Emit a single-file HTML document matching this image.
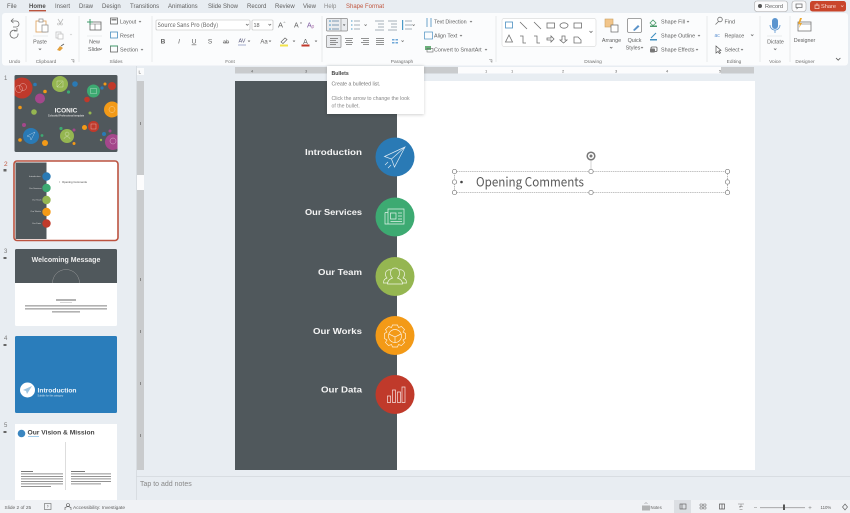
<!DOCTYPE html>
<html><head><meta charset="utf-8"><style>
html,body{margin:0;padding:0;width:850px;height:513px;overflow:hidden;background:#e8edf2}
svg{display:block;filter:blur(.35px)}
text{font-family:"Liberation Sans",sans-serif;font-size:5.4px;fill:#606060}
.tab{font-size:6px;fill:#606060}
.m{text-anchor:middle}
.g{font-size:4.8px;fill:#707070;text-anchor:middle}
.w{font-weight:bold;font-size:8.6px;fill:#f4f4f4}
.ic{fill:none;stroke:#707070;stroke-width:.8}
.wi{fill:none;stroke:#fff;stroke-width:.7;opacity:.85}
.ti{fill:none;stroke:#fff;stroke-width:.35;opacity:.8}
.h{fill:#fff;stroke:#777;stroke-width:.7}
.n{font-family:"Noto Sans CJK JP","Liberation Sans",sans-serif}
</style></head><body>
<svg width="850" height="513" viewBox="0 0 850 513" xmlns="http://www.w3.org/2000/svg">
<defs><filter id="sh" x="-20%" y="-20%" width="140%" height="140%"><feGaussianBlur stdDeviation="1.500"/></filter></defs>
<rect width="850" height="513" fill="#e8edf2"/>
<!-- tabs -->
<text class="tab" x="7" y="8">File</text>
<text class="tab" x="29" y="8" style="font-weight:bold;fill:#505050">Home</text>
<rect x="29" y="10" width="17" height="1.400" fill="#b9543f"/>
<text class="tab" x="55" y="8">Insert</text>
<text class="tab" x="79" y="8">Draw</text>
<text class="tab" x="102" y="8">Design</text>
<text class="tab" x="130" y="8">Transitions</text>
<text class="tab" x="168" y="8">Animations</text>
<text class="tab" x="208" y="8">Slide Show</text>
<text class="tab" x="247" y="8">Record</text>
<text class="tab" x="275" y="8">Review</text>
<text class="tab" x="303" y="8">View</text>
<text class="tab" x="324" y="8" style="fill:#8a8a8a">Help</text>
<text class="tab" x="346" y="8" style="fill:#c0563f">Shape Format</text>
<!-- top right -->
<rect x="754.500" y="1" width="33" height="10.500" rx="2.500" fill="#fbfbfc" stroke="#aaa" stroke-width=".6"/>
<circle cx="760" cy="6" r="2" fill="#555"/><text x="765" y="8" style="font-size:5.600px">Record</text>
<rect x="792" y="1" width="14" height="10.500" rx="2.500" fill="#fbfbfc" stroke="#aaa" stroke-width=".6"/>
<path class="ic" d="M796 4h6v3.500h-4l-1 1v-1h-1z"/>
<rect x="810" y="1" width="36" height="10.500" rx="2.500" fill="#c9452b"/>
<path d="M815 8.500V5h4v3.500zM817 3v3" fill="none" stroke="#f6cfc6" stroke-width=".7"/>
<text x="821" y="8" style="font-size:5.600px;fill:#f9dcd5">Share</text>
<path d="M841 5.500l1.200 1.200 1.200-1.200" fill="none" stroke="#f6cfc6" stroke-width=".6"/>
<!-- ribbon -->
<rect x="2" y="13" width="846" height="52.500" rx="3" fill="#fbfcfd"/>
<g stroke="#e3e5e8" stroke-width=".8">
<path d="M26 16v46M79 16v46M152 16v46M322 16v46M496 16v46M707 16v46M760 16v46M790 16v46"/>
<path d="M33 36h15M87 36h15M767 36h15"/>
</g>
<text class="g" x="14.500" y="63">Undo</text><text class="g" x="46" y="63">Clipboard</text>
<text class="g" x="116" y="63">Slides</text><text class="g" x="230" y="63">Font</text>
<text class="g" x="402" y="63">Paragraph</text><text class="g" x="593" y="63">Drawing</text>
<text class="g" x="734" y="63">Editing</text><text class="g" x="775" y="63">Voice</text><text class="g" x="805" y="63">Designer</text>
<!-- undo -->
<path class="ic" d="M11 21h5a3 3 0 0 1 0 6h-3M11 21l2.500-2.500M11 21l2.500 2"/>
<path class="ic" d="M18 33.500a4 4 0 1 1-1.500-2.500M17 28v3h-3"/>
<!-- clipboard -->
<rect x="36" y="21" width="10" height="11" fill="#fff" stroke="#e0a868" stroke-width=".9"/>
<rect x="39" y="19" width="4" height="3" fill="#fff" stroke="#888" stroke-width=".7"/>
<rect x="42" y="25" width="6" height="7" fill="#fff" stroke="#888" stroke-width=".7"/>
<text class="m" x="40" y="43.500">Paste</text>
<path class="ic" d="M38.800 48.500l1.200 1.200 1.200-1.200"/>
<path d="M58 19l2.500 4 2.500-4M60 23v1" fill="none" stroke="#bbb" stroke-width=".8"/><circle cx="58.500" cy="24" r="1" fill="none" stroke="#bbb" stroke-width=".6"/><circle cx="61.500" cy="24" r="1" fill="none" stroke="#bbb" stroke-width=".6"/>
<rect x="56" y="32" width="5" height="6" fill="none" stroke="#bbb" stroke-width=".7"/><rect x="58" y="34" width="5" height="5" fill="#fff" stroke="#bbb" stroke-width=".7"/>
<path d="M70 34l1 1 1-1" fill="none" stroke="#ccc" stroke-width=".6"/>
<path d="M57 50l3-4 3 2-3 3z" fill="#e3a03c"/><path d="M61 46l3-2" stroke="#666" stroke-width="1"/>
<path d="M71 59.500h3v3M72 61h1.500v1.500" fill="none" stroke="#888" stroke-width=".5"/>
<!-- slides -->
<rect x="90" y="22" width="11" height="8" fill="#fff" stroke="#666" stroke-width=".8"/><path d="M90 24h11M95 24v6" stroke="#666" stroke-width=".6"/>
<path d="M90 19v6M87 22h6" stroke="#3f9a6a" stroke-width="1"/>
<text class="m" x="94.500" y="43.500">New</text><text class="m" x="94" y="51">Slide</text><path class="ic" d="M99.500 48.500l1.200 1.200 1.200-1.200"/>
<rect x="110.500" y="18" width="7" height="6" fill="none" stroke="#666" stroke-width=".8"/><rect x="111.500" y="19" width="5" height="1.500" fill="#888"/>
<text x="120" y="23.500">Layout</text><path class="ic" d="M139 21l1 1 1-1"/>
<rect x="110.500" y="32" width="7" height="6" fill="none" stroke="#4a8fc0" stroke-width=".8"/>
<text x="120" y="37.500">Reset</text>
<rect x="110.500" y="46" width="7" height="6" fill="none" stroke="#666" stroke-width=".8"/><path d="M110 46h8" stroke="#3f9a6a" stroke-width="1"/>
<text x="120" y="51.500">Section</text><path class="ic" d="M141 49l1 1 1-1"/>
<!-- font -->
<rect x="156" y="20" width="94" height="10" rx="1" fill="#fff" stroke="#bbb" stroke-width=".6"/>
<text class="n" x="157.500" y="27" style="font-size:5.600px">Source Sans Pro (Body)</text><path class="ic" d="M246 24l1.300 1.300 1.300-1.300"/>
<rect x="252" y="20" width="21" height="10" rx="1" fill="#fff" stroke="#bbb" stroke-width=".6"/>
<text x="253.500" y="27" style="font-size:5.500px">18</text><path class="ic" d="M268.500 24l1.300 1.300 1.300-1.300"/>
<text x="278" y="27.500" style="font-size:7.500px">A</text><text x="283.500" y="24" style="font-size:4px">^</text>
<text x="294" y="27.500" style="font-size:7px">A</text><text x="300" y="24" style="font-size:4px">v</text>
<text x="307" y="27.500" style="font-size:7px;fill:#7c5aa0">A</text><text x="311.500" y="28" style="font-size:5px;fill:#b07ab0">p</text>
<text class="m" x="163" y="43.500" style="font-size:6.500px;font-weight:bold">B</text>
<text class="m" x="179" y="43.500" style="font-size:6.500px;font-style:italic">I</text>
<text class="m" x="194" y="43.500" style="font-size:6.500px;text-decoration:underline">U</text>
<text class="m" x="210" y="43.500" style="font-size:6.500px">S</text>
<text class="m" x="226" y="43.500" style="font-size:5.500px;text-decoration:line-through">ab</text>
<text class="m" x="242" y="42.500" style="font-size:5.500px;fill:#557">AV</text>
<text class="m" x="264" y="43.500" style="font-size:6px">Aa</text>
<path d="M238 45h8" stroke="#6a7ab0" stroke-width=".6"/>
<path class="ic" d="M248 40.500l1 1 1-1M269 40.500l1 1 1-1M293 40.500l1 1 1-1M315 40.500l1 1 1-1"/>
<path d="M281 42l4-4 2 1.500-4 4z" fill="none" stroke="#666" stroke-width=".7"/><rect x="280" y="44.500" width="8" height="2" fill="#f1e24a"/>
<text class="m" x="305.500" y="44" style="font-size:7px">A</text><rect x="301.500" y="44.500" width="8" height="2" fill="#c0392b"/>
<!-- paragraph -->
<rect x="326.500" y="18.500" width="21" height="12.500" rx="1" fill="#e9ebee" stroke="#888" stroke-width=".7"/><path d="M341 18.500v12.500" stroke="#888" stroke-width=".6"/>
<g stroke="#5a7fa0" stroke-width=".7"><path d="M332 21h7M332 25h7M332 29h7"/></g>
<g fill="#3f8fc0"><circle cx="330" cy="21" r=".8"/><circle cx="330" cy="25" r=".8"/><circle cx="330" cy="29" r=".8"/></g>
<path d="M343 24.500l1.100 1.100 1.100-1.100" fill="#444" stroke="#444" stroke-width=".5"/>
<g stroke="#8a96a2" stroke-width=".7" fill="none">
<path d="M354 21h6M354 25h6M354 29h6M375 21h9M378 24h6M378 27h6M375 30h9M388 21h9M391 24h6M391 27h6M388 30h9M405 21h7M405 25h7M405 29h7"/>
</g>
<g fill="#4a9ac8"><rect x="351" y="20.500" width="1.500" height="1"/><rect x="351" y="24.500" width="1.500" height="1"/><rect x="351" y="28.500" width="1.500" height="1"/><rect x="402" y="20" width="1.200" height="10"/></g>
<path class="ic" d="M364.500 24.500l1.100 1.100 1.100-1.100M412.500 24.500l1.100 1.100 1.100-1.100"/>
<rect x="326.500" y="35.500" width="14.500" height="12" rx="1" fill="#e9ebee" stroke="#888" stroke-width=".7"/>
<g stroke="#707070" stroke-width=".8"><path d="M330 38.500h8M330 40.500h6M330 42.500h8M330 44.500h6"/>
<path d="M345 38.500h8M346 40.500h6M345 42.500h8M346 44.500h6M361 38.500h8M363 40.500h6M361 42.500h8M363 44.500h6M376 38.500h8M376 40.500h8M376 42.500h8M376 44.500h8"/></g>
<g fill="#6fa8d8"><rect x="392" y="39" width="2.500" height="1.500"/><rect x="395.500" y="39" width="2.500" height="1.500"/><rect x="392" y="42" width="2.500" height="1.500"/><rect x="395.500" y="42" width="2.500" height="1.500"/></g>
<path class="ic" d="M401.500 40.500l1.100 1.100 1.100-1.100"/>
<text x="434" y="23.500">Text Direction</text><path class="ic" d="M470 21l1 1 1-1"/>
<path d="M427 18v9M431 18v9" stroke="#4a8fc0" stroke-width=".8"/>
<rect x="424.500" y="32" width="8" height="7" fill="none" stroke="#4a8fc0" stroke-width=".7"/>
<text x="434" y="37.500">Align Text</text><path class="ic" d="M460 35l1 1 1-1"/>
<rect x="425" y="46" width="6" height="4" fill="#6ab07a"/><rect x="427" y="48.500" width="6" height="3.500" fill="none" stroke="#666" stroke-width=".6"/>
<text x="434" y="51.500">Convert to SmartArt</text><path class="ic" d="M485 49l1 1 1-1"/>
<path d="M489 59.500h3v3M490 61h1.500v1.500" fill="none" stroke="#888" stroke-width=".5"/>
<!-- shapes -->
<rect x="502" y="18.500" width="94" height="28" rx="2" fill="#fff" stroke="#ddd" stroke-width=".7"/>
<rect x="505.500" y="22" width="7" height="6" fill="none" stroke="#4a8fc0" stroke-width=".8"/>
<path class="ic" d="M520 22l7 7M534 22l7 7"/>
<rect class="ic" x="547" y="23" width="7.500" height="5"/>
<ellipse class="ic" cx="564" cy="25.500" rx="4" ry="2.700"/>
<rect class="ic" x="574" y="23" width="7.500" height="5"/>
<path class="ic" d="M509 35l-3.500 7h7zM520 36h3v7h3M534 36h3v7h3M547 38h4v-2l3 3-3 3v-2h-4zM562 36h3v4h2l-3.500 3-3.500-3h2zM574 37h4l3 3v3h-7z"/>
<path class="ic" d="M589.500 31l1.500 1.500 1.500-1.500"/>
<!-- arrange -->
<rect x="605" y="19" width="8" height="8" fill="#f2c58a" stroke="#c9a060" stroke-width=".6"/>
<rect x="611" y="25" width="7" height="7" fill="#fff" stroke="#666" stroke-width=".7"/>
<text class="m" x="611.500" y="42">Arrange</text><path class="ic" d="M610 47l1.200 1.200 1.200-1.200"/>
<rect x="627.500" y="18.500" width="14" height="14" rx="1.500" fill="#fff" stroke="#888" stroke-width=".8"/>
<path d="M633 30l5-5 1.500 1.500-5 4.500z" fill="#5b93c9"/>
<text class="m" x="634.500" y="42">Quick</text><text class="m" x="633" y="49.500">Styles</text><path class="ic" d="M641 47l1 1 1-1"/>
<path d="M650 23l3-3 3 3-3 2.500z" fill="none" stroke="#4a9a6a" stroke-width=".8"/><rect x="650" y="25.500" width="7" height="1.500" fill="#4a9a6a"/>
<text x="661" y="23.500">Shape Fill</text><path class="ic" d="M687 21l1 1 1-1"/>
<path d="M651 38l5-5" stroke="#3f8fc0" stroke-width="1.100"/><rect x="650" y="39" width="7" height="1.500" fill="#3f8fc0"/>
<text x="661" y="37.500">Shape Outline</text><path class="ic" d="M698 35l1 1 1-1"/>
<rect x="651" y="47" width="6" height="4.500" rx="1" fill="#fff" stroke="#555" stroke-width=".8"/><rect x="650" y="48.500" width="5" height="4" rx="1" fill="#777"/>
<text x="661" y="51.500">Shape Effects</text><path class="ic" d="M696 49l1 1 1-1"/>
<!-- editing -->
<circle class="ic" cx="720" cy="19.500" r="2.300"/><path class="ic" d="M718.500 21.500l-3 3"/>
<text x="724.500" y="23.500">Find</text>
<text x="714.500" y="37" style="font-size:5px;fill:#5b8fd0">ac</text>
<text x="724.500" y="37.500">Replace</text><path class="ic" d="M751 34.500l1.200 1.200 1.200-1.200"/>
<path d="M716 46v7l2-1.500 1.500 2 1-.7-1.500-2 2-.5z" fill="#fff" stroke="#555" stroke-width=".7"/>
<text x="724.500" y="51.500">Select</text><path class="ic" d="M741 49l1 1 1-1"/>
<!-- mic -->
<rect x="772" y="18" width="6" height="11" rx="3" fill="#5c95cf"/><path d="M770 25a5 5 0 0 0 10 0M775 30v3" fill="none" stroke="#5c95cf" stroke-width=".8"/>
<text class="m" x="775.500" y="43.500">Dictate</text><path class="ic" d="M774 48.500l1.200 1.200 1.200-1.200"/>
<rect x="798" y="22" width="13" height="9" fill="#fff" stroke="#777" stroke-width=".8"/><path d="M798 24h13" stroke="#777" stroke-width=".6"/>
<path d="M800 18l-2 6h2l-1 4 3-5h-2l2-5z" fill="#eda72d"/>
<text class="m" x="804.500" y="42">Designer</text>
<path d="M836 58l2.200 2.200 2.200-2.200" fill="none" stroke="#555" stroke-width=".8"/>
<!-- rulers -->
<rect x="136" y="66" width=".8" height="434" fill="#d5d9de"/>
<rect x="137" y="68" width="7" height="7" fill="#fafbfc"/><text x="138.500" y="73.500" style="font-size:4.500px">L</text>
<rect x="235" y="67" width="223" height="6.500" fill="#c9cbcd"/>
<rect x="458" y="67" width="263" height="6.500" fill="#fcfcfd"/>
<rect x="721" y="67" width="33" height="6.500" fill="#c9cbcd"/>
<text x="251" y="72.500" style="font-size:4px">4</text><text x="305" y="72.500" style="font-size:4px">3</text><text x="485" y="72.500" style="font-size:4px">1</text><text x="511" y="72.500" style="font-size:4px">1</text><text x="562" y="72.500" style="font-size:4px">2</text><text x="615" y="72.500" style="font-size:4px">3</text><text x="666" y="72.500" style="font-size:4px">4</text><text x="719" y="72.500" style="font-size:4px">5</text>
<rect x="137" y="81" width="7" height="94" fill="#c9cbcd"/>
<rect x="137" y="175" width="7" height="15" fill="#fcfcfd"/>
<rect x="137" y="190" width="7" height="280" fill="#c9cbcd"/>
<g fill="#888"><rect x="140" y="122" width="1" height="3"/><rect x="140" y="278" width="1" height="3"/><rect x="140" y="330" width="1" height="3"/><rect x="140" y="382" width="1" height="3"/><rect x="140" y="434" width="1" height="3"/></g>
<!-- slide -->
<rect x="235" y="81" width="520" height="389" fill="#fff"/>
<rect x="235" y="81" width="162" height="389" fill="#50585c"/>
<text class="w" x="305" y="155" textLength="57" lengthAdjust="spacingAndGlyphs">Introduction</text>
<text class="w" x="305" y="215" textLength="57" lengthAdjust="spacingAndGlyphs">Our Services</text>
<text class="w" x="318" y="275" textLength="44" lengthAdjust="spacingAndGlyphs">Our Team</text>
<text class="w" x="313" y="334" textLength="49" lengthAdjust="spacingAndGlyphs">Our Works</text>
<text class="w" x="321" y="392.500" textLength="41" lengthAdjust="spacingAndGlyphs">Our Data</text>
<circle cx="395" cy="157" r="19.500" fill="#2a7ab5"/>
<circle cx="395" cy="217" r="19.500" fill="#3daa72"/>
<circle cx="395" cy="276.500" r="19.500" fill="#95b651"/>
<circle cx="395" cy="335.500" r="19.500" fill="#f39a17"/>
<circle cx="395" cy="394.500" r="19.500" fill="#c03a2b"/>
<!-- plane -->
<path class="wi" d="M405 147l-20.500 9.500 7 2.500 3 8zM405 147l-13.500 12M405 147l-10.500 20M388 162l-3 3M391 165l-3 3"/>
<!-- news -->
<path class="wi" d="M388 209h16v15h-16zM385 212.500h3M385 212.500v11.500h3M390.500 213h5.500v6h-5.500zM398 213h4M398 216h4M398 219h4M390.500 221.500h11.500"/>
<!-- team -->
<path class="wi" d="M395 268c-3 0-4.500 2.500-4.500 5 0 2 1 4 2 5-3 1-5 2.500-5 6h15c0-3.500-2-5-5-6 1-1 2-3 2-5 0-2.500-1.500-5-4.500-5zM391 270c-3-1-5.500 1-5.500 4 0 1.500.5 3 1.500 4-2.500 1-3.500 2-3.500 5h4M399 270c3-1 5.500 1 5.500 4 0 1.500-.5 3-1.500 4 2.500 1 3.500 2 3.500 5h-4"/>
<!-- gear -->
<path class="wi" d="M392.500 325h5l1 2.500 3-1 3 3-1.500 2.500 2.500 1.500v5l-2.500 1.500 1.500 2.500-3 3-3-1-1 2.500h-5l-1-2.500-3 1-3-3 1.500-2.500-2.500-1.500v-5l2.500-1.500-1.500-2.500 3-3 3 1z"/>
<circle class="wi" cx="395" cy="336" r="6.500"/><path class="wi" d="M389 334l6 3 6-3M395 337v5.500"/>
<!-- chart -->
<path class="wi" d="M387.500 396h3v6.500h-3zM392.500 390h3v12.500h-3zM397.500 392h3v10.500h-3zM402 387h3v15.500h-3z"/>
<!-- selection -->
<path d="M591 160v11" stroke="#c8c8c8" stroke-width=".8"/>
<circle cx="591" cy="156" r="3.800" fill="none" stroke="#777" stroke-width="1.500"/><circle cx="591" cy="156" r="1.500" fill="#777"/>
<rect x="454.500" y="171.500" width="273" height="21" fill="none" stroke="#888" stroke-width=".6" stroke-dasharray="1.500 .7"/>
<circle class="h" cx="454.500" cy="171.500" r="2.200"/><circle class="h" cx="591" cy="171.500" r="2.200"/><circle class="h" cx="727.500" cy="171.500" r="2.200"/><circle class="h" cx="454.500" cy="182" r="2.200"/><circle class="h" cx="727.500" cy="182" r="2.200"/><circle class="h" cx="454.500" cy="192.500" r="2.200"/><circle class="h" cx="591" cy="192.500" r="2.200"/><circle class="h" cx="727.500" cy="192.500" r="2.200"/>
<circle cx="461.500" cy="182" r="1.300" fill="#444"/>
<text class="n" x="476" y="186.500" textLength="108" lengthAdjust="spacingAndGlyphs" style="font-size:13px;fill:#5a5a5a">Opening Comments</text>
<!-- tooltip -->
<rect x="327" y="66" width="97" height="49" fill="#000" opacity=".18" filter="url(#sh)"/>
<rect x="327" y="66" width="97" height="48" fill="#fff"/>
<text x="331.500" y="75" style="font-size:5.200px;font-weight:bold;fill:#444">Bullets</text>
<text x="331.500" y="85.500" style="font-size:5.200px;fill:#777">Create a bulleted list.</text>
<text x="331.500" y="100" style="font-size:5.200px;fill:#888">Click the arrow to change the look</text>
<text x="331.500" y="107.500" style="font-size:5.200px;fill:#888">of the bullet.</text>
<!-- notes -->
<rect x="136" y="476" width="714" height=".8" fill="#d5d9de"/>
<text x="140" y="486" style="font-size:7px;fill:#888">Tap to add notes</text>
<!-- thumbs labels -->
<text x="4" y="80" style="font-size:6px;fill:#777">1</text>
<text x="4" y="166" style="font-size:6.500px;fill:#c0563f">2</text>
<text x="4" y="253" style="font-size:6px;fill:#777">3</text>
<text x="4" y="340" style="font-size:6px;fill:#777">4</text>
<text x="4" y="427" style="font-size:6px;fill:#777">5</text>
<g fill="#666"><rect x="3.500" y="169" width="3" height="2.500"/><rect x="3.500" y="257" width="3" height="2"/><rect x="3.500" y="344" width="3" height="2"/><rect x="3.500" y="431" width="3" height="2"/></g>
<!-- thumb1 -->
<clipPath id="c1"><rect x="14.500" y="75" width="103" height="77" rx="1.500"/></clipPath>
<g clip-path="url(#c1)">
<rect x="14.500" y="75" width="103" height="77" fill="#50585c"/>
<circle cx="22" cy="88" r="10.500" fill="#c0392b"/><circle cx="60" cy="84" r="8" fill="#95b651"/><circle cx="75" cy="84" r="2.800" fill="#2a7ab5"/>
<circle cx="93.500" cy="91" r="6.500" fill="#3daa72"/><circle cx="112" cy="86" r="4" fill="#c0392b"/><circle cx="112" cy="109.500" r="8" fill="#f39a17"/>
<circle cx="40" cy="98.500" r="5" fill="#a4478b"/><circle cx="87" cy="99.500" r="2.800" fill="#c0392b"/><circle cx="31" cy="136" r="8" fill="#2a7ab5"/>
<circle cx="67" cy="136" r="7" fill="#95b651"/><circle cx="93.500" cy="126.500" r="5.500" fill="#c0392b"/><circle cx="113" cy="142" r="8" fill="#a4478b"/>
<circle cx="45" cy="143" r="3" fill="#f39a17"/><circle cx="84.500" cy="127.500" r="2.500" fill="#f39a17"/><circle cx="34" cy="112" r="2.800" fill="#95b651"/>
<circle cx="20" cy="107.500" r="1.800" fill="#f39a17"/><circle cx="35" cy="84.500" r="1.800" fill="#2a7ab5"/><circle cx="45" cy="91.500" r="1.800" fill="#f39a17"/>
<circle cx="68.500" cy="92" r="1.600" fill="#3daa72"/><circle cx="102" cy="88" r="1.600" fill="#2a7ab5"/><circle cx="105" cy="84" r="1.500" fill="#f39a17"/>
<circle cx="24" cy="125" r="2" fill="#a4478b"/><circle cx="61" cy="128.500" r="1.600" fill="#3daa72"/><circle cx="90" cy="113" r="1.500" fill="#95b651"/>
<circle cx="104" cy="134" r="2" fill="#2a7ab5"/><circle cx="110" cy="131" r="1.500" fill="#a4478b"/><circle cx="20" cy="140" r="1.800" fill="#f39a17"/>
<circle cx="42" cy="135.500" r="1.400" fill="#3daa72"/><circle cx="74" cy="143.500" r="1.500" fill="#f39a17"/><circle cx="74" cy="130" r="1.500" fill="#a4478b"/><circle cx="101" cy="140" r="1.200" fill="#95b651"/>
<circle class="ti" cx="19" cy="89" r="3.500"/><circle class="ti" cx="23" cy="87" r="3.500"/>
<path class="ti" d="M57 87l5-5M57 81h6v6h-6z"/>
<rect class="ti" x="90.500" y="88.500" width="6" height="5"/>
<circle class="ti" cx="112" cy="109.500" r="3"/><path class="ti" d="M35 132l-8 4 3 1 1 3z"/>
<path class="ti" d="M64 139c0-3 6-3 6 0M67 132a2 2 0 1 0 .1 0"/><circle class="ti" cx="113" cy="141" r="3"/><rect class="ti" x="91" y="124" width="5" height="5"/>
</g>
<text class="m" x="66" y="112.500" style="font-size:6.500px;font-weight:bold;fill:#f4f4f4">ICONIC</text>
<text class="m" x="66" y="116.500" style="font-size:2.400px;fill:#ddd;font-weight:bold">Colourful Professional template</text>
<!-- thumb2 -->
<rect x="14" y="161" width="104" height="79.500" rx="3" fill="#fff" stroke="#bc5340" stroke-width="1.600"/>
<path d="M15.500 162.500h31v76.500h-31z" fill="#50585c"/>
<text x="29" y="177" style="font-size:2.200px;fill:#ddd">Introduction</text><text x="29" y="189" style="font-size:2.200px;fill:#ddd">Our Services</text><text x="32" y="200.500" style="font-size:2.200px;fill:#ddd">Our Team</text><text x="30.500" y="212" style="font-size:2.200px;fill:#ddd">Our Works</text><text x="32" y="224" style="font-size:2.200px;fill:#ddd">Our Data</text>
<circle cx="46.500" cy="176.500" r="4.200" fill="#2a7ab5"/><circle cx="46.500" cy="188" r="4.200" fill="#3daa72"/><circle cx="46.500" cy="200" r="4.200" fill="#95b651"/><circle cx="46.500" cy="212" r="4.200" fill="#f39a17"/><circle cx="46.500" cy="223.500" r="4.200" fill="#c03a2b"/>
<circle cx="59.500" cy="182" r=".4" fill="#444"/><text x="62" y="183" style="font-size:2.800px;fill:#444">Opening Comments</text>
<!-- thumb3 -->
<rect x="15" y="249" width="102" height="77" rx="1.500" fill="#fff"/>
<path d="M15 283v-32.500a1.500 1.500 0 0 1 1.500-1.500h99a1.500 1.500 0 0 1 1.500 1.500V283z" fill="#50585c"/>
<text class="m" x="66" y="262" style="font-size:7px;font-weight:bold;fill:#eee">Welcoming Message</text>
<path d="M52.500 283a13.500 13.500 0 0 1 27 0" fill="none" stroke="#aaa" stroke-width=".4"/>
<g fill="#666"><rect x="56" y="299.500" width="20" height="1"/><rect x="60" y="302" width="12" height=".6" fill="#bbb"/><rect x="25" y="305.500" width="82" height=".8"/><rect x="25" y="308.500" width="82" height=".8"/><rect x="52" y="311.500" width="28" height=".8"/></g>
<!-- thumb4 -->
<rect x="15" y="336" width="102" height="77" rx="1.500" fill="#2a7dbb"/>
<circle cx="27.500" cy="390" r="7.500" fill="#fff"/><path d="M32 386l-9 4 3 1 1 3z" fill="#9cc4e0"/>
<text x="37.500" y="392.500" style="font-size:6.700px;font-weight:bold;fill:#f0f6fb">Introduction</text>
<text x="37.500" y="396.500" style="font-size:2.400px;fill:#cfe2f0">Subtitle for this category</text>
<!-- thumb5 -->
<rect x="15" y="424" width="102" height="76" fill="#fff"/>
<circle cx="21.500" cy="433.500" r="3.800" fill="#3b86c0"/>
<text x="27.500" y="434.500" style="font-size:6.700px;font-weight:bold;fill:#444">Our Vision &amp; Mission</text>
<rect x="28" y="436" width="11" height=".8" fill="#8cc0e4"/>
<rect x="65.300" y="442" width=".4" height="48" fill="#aaa"/>
<g fill="#777"><rect x="21" y="471" width="12" height="1"/><rect x="21" y="473.500" width="42" height=".8"/><rect x="21" y="476" width="42" height=".8"/><rect x="21" y="478.500" width="42" height=".8"/><rect x="21" y="481" width="42" height=".8"/><rect x="21" y="483.500" width="42" height=".8"/><rect x="21" y="486" width="30" height=".8"/>
<rect x="71" y="471" width="14" height="1"/><rect x="71" y="473.500" width="40" height=".8"/><rect x="71" y="476" width="40" height=".8"/><rect x="71" y="478.500" width="40" height=".8"/><rect x="71" y="481" width="40" height=".8"/><rect x="71" y="483.500" width="30" height=".8"/></g>
<!-- status -->
<rect x="0" y="500" width="850" height="13" fill="#f0f2f5"/>
<text x="4.500" y="509" style="font-size:4.800px">Slide 2 of 25</text>
<rect x="44.500" y="503.500" width="6.500" height="6" fill="none" stroke="#666" stroke-width=".6"/><path d="M47 505l1.500 1-1.500 1.500" fill="none" stroke="#666" stroke-width=".5"/>
<circle cx="68" cy="505" r="1.500" fill="none" stroke="#555" stroke-width=".6"/><path d="M65 510v-2.500l3-1 3 1v2.500" fill="none" stroke="#555" stroke-width=".6"/>
<text x="73" y="509" style="font-size:4.800px">Accessibility: Investigate</text>
<path d="M642 510.500v-5h8v5z" fill="#888" opacity=".6"/>
<path d="M644.500 504l1.500-1.500 1.500 1.500" fill="none" stroke="#777" stroke-width=".5"/>
<text x="650.500" y="509" style="font-size:4.300px">Notes</text>
<rect x="674" y="500" width="17" height="13" fill="#dcdfe3"/>
<rect x="680" y="504" width="6" height="5" fill="none" stroke="#555" stroke-width=".6"/><path d="M682 504v5" stroke="#555" stroke-width=".6"/>
<path d="M700 504h2.500v2h-2.500zM703.500 504h2.500v2h-2.500zM700 507h2.500v2h-2.500zM703.500 507h2.500v2h-2.500z" fill="none" stroke="#666" stroke-width=".5"/>
<path d="M719.500 504h5v5h-5zM722 504v5" fill="none" stroke="#555" stroke-width=".7"/>
<path d="M738 504h6M741 504v3h-2l2-1 2 1M739.500 509.500h3" fill="none" stroke="#777" stroke-width=".5"/>
<rect x="754" y="507.500" width="3" height=".5" fill="#888"/>
<rect x="760" y="507.400" width="45" height=".7" fill="#888"/>
<rect x="783" y="504.500" width="2" height="5.500" fill="#555"/>
<path d="M808.500 507.700h3M810 506.200v3" stroke="#888" stroke-width=".5"/>
<text x="820.500" y="509" style="font-size:4.300px">110%</text>
<path d="M845 504l2.500 3-2.500 3-2.500-3z" fill="none" stroke="#666" stroke-width=".7"/>
</svg>
</body></html>
